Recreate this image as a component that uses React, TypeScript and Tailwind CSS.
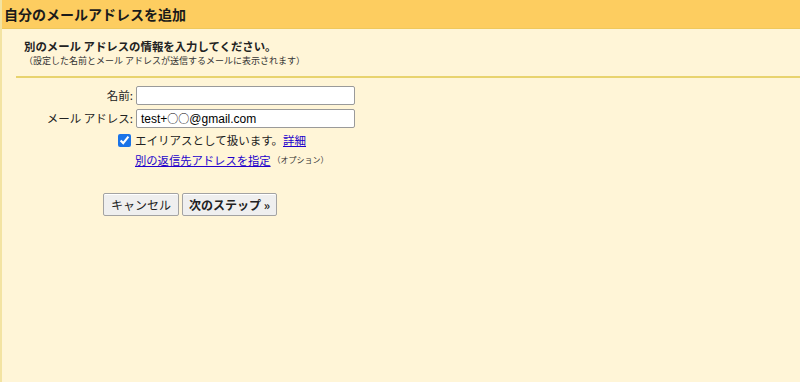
import React from "react";

const jp = { fontFamily: '"Noto Sans CJK JP", "Noto Sans", sans-serif' };
const lat = { fontFamily: '"Liberation Sans", "Noto Sans CJK JP", sans-serif' };

export default function App() {
  return (
    <div
      className="w-[800px] h-[382px] bg-[#fff5d7] border-l-2 border-[#f3e3a2] text-[#222] overflow-hidden"
      style={jp}
    >
      <div className="h-[29px] bg-[#fdcd60] border-b border-[#efc85c] pl-[2px] text-[14px] font-bold leading-[28px] text-[#1a1a1a]">
        自分のメールアドレスを追加
      </div>
      <div className="pl-[22px] pt-[9px]">
        <div className="text-[11.4px] font-bold leading-[16px]">別のメール アドレスの情報を入力してください。</div>
        <div className="text-[9px] leading-[12px] text-[#333] mt-[1px]">（設定した名前とメール アドレスが送信するメールに表示されます）</div>
      </div>
      <div className="ml-[14px] mt-[9px] border-t-2 border-[#e8d36e]" />
      <div className="mt-[8px]">
        <div className="flex items-center h-[19px]">
          <div className="w-[134px] pr-[3px] text-right text-[11.5px] leading-[19px]">名前:</div>
          <div className="w-[219px] h-[19px] bg-white border border-[#9a9a9a] rounded-[2px]" />
        </div>
        <div className="flex items-center h-[19px] mt-[4px]">
          <div className="w-[134px] pr-[3px] text-right text-[11.5px] leading-[19px]">メール アドレス:</div>
          <div
            className="w-[219px] h-[19px] bg-white border border-[#9a9a9a] rounded-[2px] pl-[4px] flex items-center text-[12px] text-black"
            style={lat}
          >
            <span>test+</span>
            <span className="text-[11px]" style={jp}>○○</span>
            <span>@gmail.com</span>
          </div>
        </div>
        <div className="flex items-center h-[16px] mt-[4px]">
          <div className="w-[116px]" />
          <input type="checkbox" defaultChecked className="w-[13px] h-[13px] m-0 accent-[#1a73e8]" />
          <span className="ml-[4px] text-[11.5px] leading-[16px]">エイリアスとして扱います。</span>
          <a className="text-[11.5px] leading-[16px] text-[#2200cc] underline cursor-pointer">詳細</a>
        </div>
        <div className="flex items-center h-[16px] mt-[4px]">
          <div className="w-[133px]" />
          <a className="text-[11.3px] leading-[16px] text-[#2200cc] underline cursor-pointer">別の返信先アドレスを指定</a>
          <span className="ml-[2px] text-[8px] leading-[16px] text-[#333]">（オプション）</span>
        </div>
        <div className="flex mt-[25px] pl-[101px] gap-[3px]">
          <button className="h-[23px] px-[7px] bg-[#efefef] border border-[#a3a3a3] rounded-[2px] text-[12px] text-[#222] shadow-[inset_0_1px_0_#fff]">
            キャンセル
          </button>
          <button className="h-[23px] px-[6px] bg-[#efefef] border border-[#a3a3a3] rounded-[2px] text-[12px] font-bold text-[#222] shadow-[inset_0_1px_0_#fff]">
            次のステップ »
          </button>
        </div>
      </div>
    </div>
  );
}
